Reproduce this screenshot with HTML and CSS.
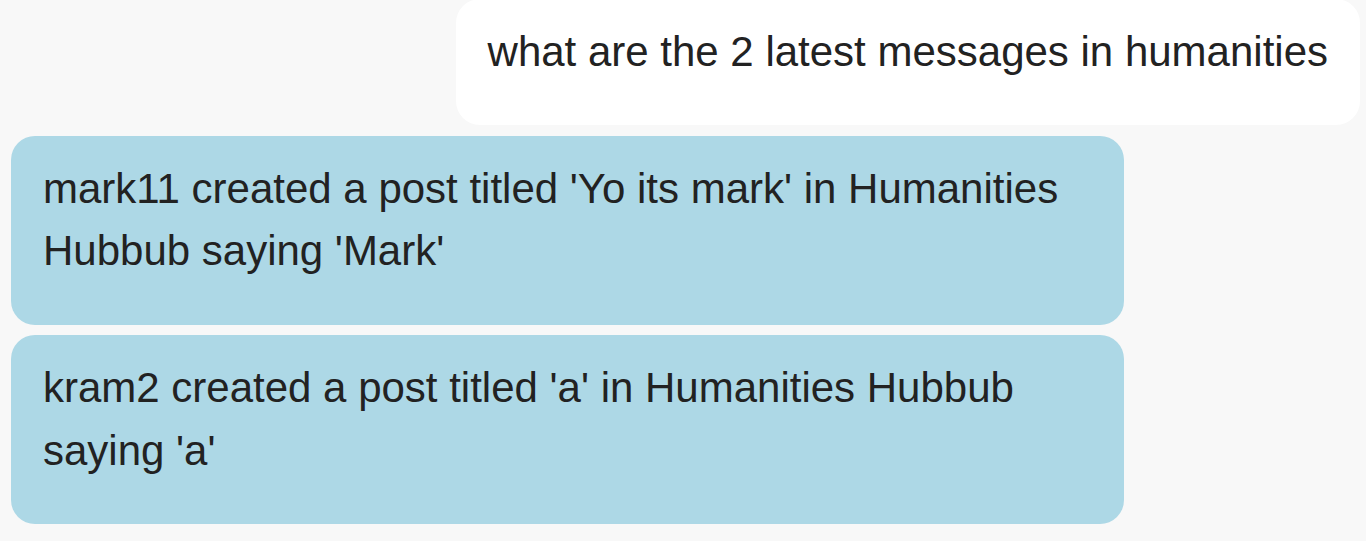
FILE: index.html
```html
<!DOCTYPE html>
<html lang="en">
<head>
<meta charset="utf-8">
<title>Chat</title>
<link rel="stylesheet" href="styles.css">
</head>
<body>
<div class="chat">
  <div class="msg user">what are the 2 latest messages in humanities</div>
  <div class="msg bot">mark11 created a post titled 'Yo its mark' in Humanities Hubbub saying 'Mark'</div>
  <div class="msg bot">kram2 created a post titled 'a' in Humanities Hubbub saying 'a'</div>
</div>
</body>
</html>
```
FILE: styles.css
```css
html, body {
  margin: 0;
  padding: 0;
  background: #f8f8f8;
  overflow: hidden;
}
body {
  font-family: "Liberation Sans", Arial, sans-serif;
  color: #222;
}
.chat {
  display: flex;
  flex-direction: column;
  gap: 10.7px;
  padding: 0 6px 0 11px;
  margin-top: -1px;
}
.msg {
  font-size: 42px;
  line-height: 62.3px;
  padding: 22px 32px 42px 32px;
  border-radius: 24px;
  box-sizing: border-box;
}
.user {
  align-self: flex-end;
  background: #ffffff;
}
.bot {
  align-self: flex-start;
  background: #add8e6;
  width: 1113px;
}
```
